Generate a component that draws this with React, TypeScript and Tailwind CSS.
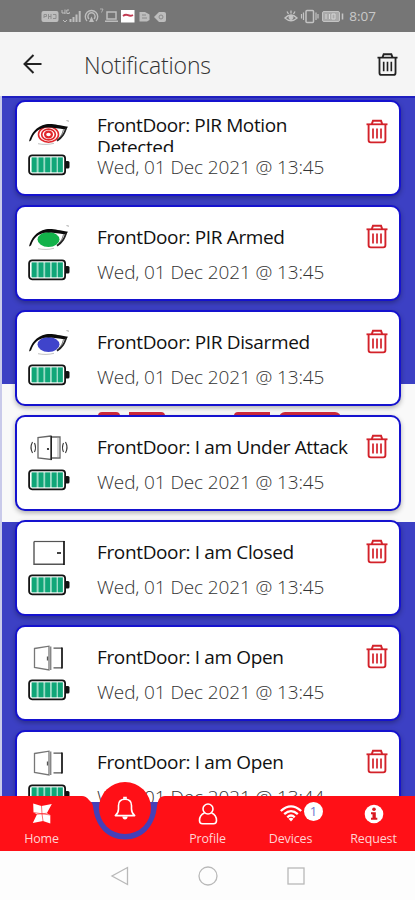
import { Fragment } from 'react';
import clsx from 'clsx';

type IconKind =
  | 'eye-motion'
  | 'eye-armed'
  | 'eye-disarmed'
  | 'attack'
  | 'closed'
  | 'open';

type Notification = {
  id: number;
  icon: IconKind;
  title: string;
  date: string;
  wraps?: boolean;
};

const notifications: Notification[] = [
  {
    id: 1,
    icon: 'eye-motion',
    title: 'FrontDoor: PIR Motion Detected',
    date: 'Wed, 01 Dec 2021 @ 13:45',
    wraps: true,
  },
  {
    id: 2,
    icon: 'eye-armed',
    title: 'FrontDoor: PIR Armed',
    date: 'Wed, 01 Dec 2021 @ 13:45',
  },
  {
    id: 3,
    icon: 'eye-disarmed',
    title: 'FrontDoor: PIR Disarmed',
    date: 'Wed, 01 Dec 2021 @ 13:45',
  },
  {
    id: 4,
    icon: 'attack',
    title: 'FrontDoor: I am Under Attack',
    date: 'Wed, 01 Dec 2021 @ 13:45',
  },
  {
    id: 5,
    icon: 'closed',
    title: 'FrontDoor: I am Closed',
    date: 'Wed, 01 Dec 2021 @ 13:45',
  },
  {
    id: 6,
    icon: 'open',
    title: 'FrontDoor: I am Open',
    date: 'Wed, 01 Dec 2021 @ 13:45',
  },
  {
    id: 7,
    icon: 'open',
    title: 'FrontDoor: I am Open',
    date: 'Wed, 01 Dec 2021 @ 13:44',
  },
];

function TrashIcon({ className }: { className?: string }) {
  return (
    <svg
      viewBox="0 0 22 24"
      className={className}
      fill="none"
      stroke="currentColor"
    >
      <path d="M0.5 4.8H21.5" strokeWidth="1.8" />
      <path d="M5.8 4.5L7 1.2H15L16.2 4.5" strokeWidth="2" />
      <path
        d="M2.6 5V20.8Q2.6 22.9 4.7 22.9H17.3Q19.4 22.9 19.4 20.8V5"
        strokeWidth="1.9"
      />
      <path d="M7 9V19M11 9V19M15 9V19" strokeWidth="1.7" />
    </svg>
  );
}

function EyeIcon({ kind }: { kind: IconKind }) {
  return (
    <svg viewBox="0 0 42 28" className="h-7 w-[42px]" fill="none">
      {kind === 'eye-motion' ? (
        <g stroke="#e0262b">
          <ellipse cx="20.5" cy="16.5" rx="10" ry="7.7" strokeWidth="1.6" />
          <ellipse cx="20.5" cy="16.5" rx="6.8" ry="5.4" strokeWidth="1.7" />
          <ellipse cx="20.5" cy="16.5" rx="3.4" ry="2.9" strokeWidth="2.2" />
        </g>
      ) : (
        <ellipse
          cx="20.5"
          cy="16.5"
          rx="11"
          ry="7.6"
          fill={kind === 'eye-armed' ? '#12b24a' : '#3f44cb'}
        />
      )}
      <path
        d="M1 23.5C3 15.5 8 8.5 18 6.3C25 5.3 30 7.3 40 8.7L38 11.4C29 10.4 24 8.8 18 9.6C10 10.6 5.8 15 3 22.5Z"
        fill="#0b0b0b"
      />
      <path
        d="M38.2 10C36.5 15 35 19 29 22.7"
        stroke="#222"
        strokeWidth="1.8"
      />
      <path d="M35.5 11.5C34.5 15.5 33.5 17.5 31 20" stroke="#444" strokeWidth="0.8" />
      <path d="M10 25.7C15 26.7 21 26.7 26 25.3" stroke="#bbb" strokeWidth="0.9" />
      <path d="M38.5 2.6L41 3.2" stroke="#aaa" />
    </svg>
  );
}

function DoorIcon({ kind }: { kind: IconKind }) {
  if (kind === 'closed') {
    return (
      <svg viewBox="0 0 42 28" className="h-7 w-[42px]" fill="none">
        <path d="M6 3.5H36.5" stroke="#555" strokeWidth="1.2" />
        <path d="M6 3.5V26.3H36" stroke="#555" strokeWidth="1.4" />
        <path d="M36 3V27" stroke="#111" strokeWidth="1.7" />
        <path d="M29 15H33" stroke="#222" strokeWidth="1.7" />
      </svg>
    );
  }
  if (kind === 'attack') {
    return (
      <svg viewBox="0 0 42 28" className="h-7 w-[42px]" fill="none">
        <g stroke="#666" strokeWidth="1.3">
          <path d="M23 3L10 4.5V25L23 26.5Z" />
          <path d="M24 4H32V25H24" />
          <path d="M30 4V25" stroke="#999" strokeWidth="0.8" />
        </g>
        <path d="M23.3 3V27" stroke="#222" strokeWidth="1.4" />
        <circle cx="20" cy="16" r="1.1" fill="#111" />
        <g stroke="#333" strokeWidth="1.1">
          <path d="M4.5 9Q1.5 14.5 4.5 20M6.5 10Q8.5 14.5 6.5 19" />
          <path d="M37.5 9Q40.5 14.5 37.5 20M35.5 10Q33.5 14.5 35.5 19" />
        </g>
      </svg>
    );
  }
  return (
    <svg viewBox="0 0 42 28" className="h-7 w-[42px]" fill="none">
      <path
        d="M6.5 5.5L21 3.2V27L6.5 24.5Z"
        stroke="#777"
        strokeWidth="1.3"
      />
      <path d="M22.8 3.5V27" stroke="#555" strokeWidth="1" />
      <path d="M19.5 13.5V17.5" stroke="#555" strokeWidth="1.3" />
      <path d="M25.5 5.2H34M25.5 24.8H34" stroke="#555" strokeWidth="1.3" />
      <path d="M34 4.5V25.4" stroke="#111" strokeWidth="1.7" />
    </svg>
  );
}

function BatteryIcon() {
  return (
    <svg viewBox="0 0 42 22" className="h-[22px] w-[42px]">
      <rect x="37" y="7" width="4.5" height="7.5" rx="1.5" fill="#111" />
      <rect
        x="1.1"
        y="1.3"
        width="36"
        height="19"
        rx="3"
        fill="#fff"
        stroke="#141414"
        strokeWidth="1.8"
      />
      <rect x="3.4" y="3.4" width="31.4" height="14.9" fill="#9bdcc6" />
      <path
        d="M6.2 3.4V18.3M13 3.4V18.3M19.6 3.4V18.3M26.2 3.4V18.3M32.4 3.4V18.3"
        stroke="#10a678"
        strokeWidth="4.8"
      />
    </svg>
  );
}

function NotificationCard({ item }: { item: Notification }) {
  return (
    <div className="flex h-24 shrink-0 rounded-[10px] border-2 border-[#1512cf] bg-white shadow-[0_2px_5px_rgba(0,0,0,0.3)]">
      <div className="flex w-20 flex-col pl-[11px] pt-4">
        {item.icon.startsWith('eye') ? (
          <EyeIcon kind={item.icon} />
        ) : (
          <DoorIcon kind={item.icon} />
        )}
        <div className="mt-2">
          <BatteryIcon />
        </div>
      </div>
      <div className="w-[262px]">
        <div
          className={clsx(
            'h-[50px] overflow-hidden text-[19px] leading-[22px] text-[#111]',
            item.wraps
              ? 'w-[215px] pt-3 tracking-[-0.4px]'
              : 'pt-[19px] tracking-[-0.36px] whitespace-nowrap',
          )}
        >
          {item.title}
        </div>
        <div className="pt-[4px] text-[19px] font-light leading-[22px] tracking-[-0.12px] whitespace-nowrap text-[#333]">
          {item.date}
        </div>
      </div>
      <TrashIcon className="mt-[17px] ml-[7px] h-[25px] w-[22px] text-[#d3222a]" />
    </div>
  );
}

function StatusBar() {
  return (
    <div className="flex h-8 shrink-0 items-center justify-between bg-[#767676] pl-[41px] pr-[39px] text-[#c9c9c9]">
      <svg viewBox="0 0 126 16" className="h-4 w-[126px]" fill="none" stroke="#bdbdbd">
        <rect x="0.5" y="3" width="17" height="11" rx="2" fill="#bdbdbd" stroke="none" />
        <path d="M3 10V6.5H5.5V8.5H3M7.5 6V11M7.5 8.5H10M10 6V11M12 6.5H15V10.5H12" stroke="#8f8f8f" />
        <path d="M21 2V5H24M24 1.5V6M28 2H25.8V5.5H28.3V4" strokeWidth="1" />
        <path d="M22 12L24 14L26 12" />
        <path d="M29.5 14V11M32.5 14V9M35.5 14V6.5M38.7 14V3" strokeWidth="2" />
        <path d="M46 13A6.2 6.2 0 1 1 55 13M48 11A3.6 3.6 0 1 1 53 11" strokeWidth="1.4" />
        <path d="M50.5 8.5L48 14H53Z" fill="#bdbdbd" stroke="none" />
        <path d="M59 1H62L60.5 4.5" strokeWidth="0.8" />
        <path d="M66 4H75V11H66ZM64 13.3H77" strokeWidth="1.5" />
        <rect x="80" y="2" width="13.5" height="12.5" fill="#fff" stroke="none" />
        <path d="M82 8Q84.5 6 87 7.2T92 7" stroke="#c23b52" strokeWidth="1.9" />
        <path d="M98.5 4H104L108.5 6.5V12L106 13.5H98.5Z" fill="#bdbdbd" stroke="none" />
        <path d="M101 7H105M101 10H106" stroke="#8a8a8a" />
        <path d="M113 9L118 4H123Q125 4 125 6V12Q125 14 123 14H118Z" fill="#bdbdbd" stroke="none" />
        <circle cx="120" cy="9" r="2" stroke="#8a8a8a" />
      </svg>
      <div className="flex items-center gap-1">
        <svg viewBox="0 0 61 16" className="h-4 w-[61px]" fill="none" stroke="#c4c4c4">
          <path d="M3 3.5L4.5 6M7 2.5V5.5M11 3.5L9.5 6" strokeWidth="1.3" />
          <path d="M1 10Q7 15.5 13 10Q7 4 1 10Z" strokeWidth="1.4" />
          <circle cx="7" cy="9.5" r="2" fill="#c4c4c4" />
          <rect x="22" y="2.5" width="7.5" height="12" rx="1" strokeWidth="1.5" />
          <path d="M19.5 4.5V12M17.5 6V10.5M32 4.5V12M34 6V10.5" strokeWidth="1.2" />
          <rect x="38.5" y="3.5" width="17" height="10" rx="1.5" fill="#aaa" />
          <path d="M42 6V11M45.5 6V11M48 6H51V11H48Z" stroke="#d5d5d5" />
          <path d="M58.5 5.5V11.5" strokeWidth="1.6" />
        </svg>
        <span className="text-[13.5px] leading-4">8:07</span>
      </div>
    </div>
  );
}

// Blue page with the white logo band that shows between the cards
function Backdrop() {
  return (
    <div className="absolute inset-0 flex flex-col pl-0.5">
      <div className="h-72 border-t-2 border-[#1f1fc0] bg-[#3c40c4]" />
      <div className="flex h-[138px] items-start gap-[9px] bg-[#f9f9f9] pl-24 pt-7">
        <div className="h-5 w-[22px] rounded-t-sm bg-[#cf2b3c]" />
        <div className="h-5 w-9 rounded-tr-sm bg-[#cf2b3c]" />
        <div className="ml-[60px] h-5 w-9 rounded-tl-sm bg-[#cf2b3c]" />
        <div className="h-5 w-[62px] rounded-t-md bg-[#cf2b3c]" />
      </div>
      <div className="flex-1 bg-[#3c40c4]" />
    </div>
  );
}

function HomeIcon() {
  return (
    <svg viewBox="0 0 20 21" className="h-[21px] w-5" fill="#fff">
      <path d="M1.2 0.5L9.5 3L19.8 1L14.8 10.2L18.3 12V20.5L11 18L0.8 20L5 11.2L1.5 9.5Z" />
      <path
        d="M9.5 3L10 10.8M1.5 9.5L10 10.8L14.8 10.2M5 11.2L10 10.8L18.3 12M10 10.8L11 18"
        stroke="#ff1017"
        strokeWidth="0.6"
        fill="none"
      />
    </svg>
  );
}

function ProfileIcon() {
  return (
    <svg viewBox="0 0 20 22" className="h-[22px] w-5" fill="none" stroke="#fff" strokeWidth="1.6">
      <circle cx="10" cy="6" r="5" />
      <path d="M6.5 10Q1.5 12 1.5 17.5Q1.5 20.8 4.5 20.8H15.5Q18.5 20.8 18.5 17.5Q18.5 12 13.5 10" />
    </svg>
  );
}

function WifiIcon() {
  return (
    <svg viewBox="0 0 22 17" className="h-[17px] w-[22px]" fill="none" stroke="#fff" strokeWidth="2.3">
      <path d="M0.8 6Q11 -3.2 21.2 6M4.2 9.2Q11 3 17.8 9.2M7.3 12.3Q11 8.8 14.7 12.3" />
      <path d="M8.5 13.8Q11 11.8 13.5 13.8L11 16.5Z" fill="#fff" stroke="none" />
    </svg>
  );
}

function InfoIcon() {
  return (
    <svg viewBox="0 0 20 20" className="h-5 w-5">
      <circle cx="10" cy="10" r="9.3" fill="#fff" />
      <circle cx="10" cy="5.3" r="1.8" fill="#d81921" />
      <path d="M7 8.2H11.8V13.8H13.3V15.8H7V13.8H8.5V10.2H7Z" fill="#d81921" />
    </svg>
  );
}

function BellIcon() {
  return (
    <svg viewBox="0 0 22 24" className="h-6 w-[22px]" fill="none" stroke="#fff" strokeWidth="1.6">
      <path d="M1.3 19.6Q4.5 17 4.5 13V9.5Q4.5 3.2 11 3.2T17.5 9.5V13Q17.5 17 20.7 19.6Z" strokeLinejoin="round" />
      <path d="M10 3V1.5H12V3" />
      <path d="M8.3 20.5H13.7Q13.3 23.5 11 23.5T8.3 20.5Z" fill="#fff" stroke="none" />
    </svg>
  );
}

const tabs = [
  { label: 'Home', icon: <HomeIcon />, iconClass: 'pt-[7px]' },
  { label: '', icon: null, iconClass: '' },
  { label: 'Profile', icon: <ProfileIcon />, iconClass: 'pt-[7px]' },
  { label: 'Devices', icon: <WifiIcon />, iconClass: 'pt-[9px]' },
  { label: 'Request', icon: <InfoIcon />, iconClass: 'pt-2' },
];

function TabBar() {
  return (
    <div className="relative z-10 -mt-1.5 h-[55px] shrink-0">
      <svg viewBox="0 0 415 55" className="absolute inset-0 h-[55px] w-[415px]">
        <path d="M85 6H162V45H85Z" fill="#4540b8" />
        <path
          d="M0 0H82Q86 0 89 4Q92 6 93 10C95 31 108 43.500 125 43.500S155 31 157 10Q157.500 6 159 3Q161 0 165 0H415V55H0Z"
          fill="#ff1017"
        />
      </svg>
      <div className="absolute -top-3.5 left-[99px] flex size-[52px] items-center justify-center rounded-full bg-[#ff1017]">
        <BellIcon />
      </div>
      <div className="relative grid h-full grid-cols-5 text-center text-[12.5px] tracking-[-0.15px] text-[#ffd3d3]">
        {tabs.map((tab, index) => (
          <Fragment key={index}>
            <div className="flex flex-col items-center">
              <div className={clsx('flex h-[34px] items-start', tab.iconClass)}>
                {tab.icon}
              </div>
              <span className="leading-[17px]">{tab.label}</span>
            </div>
          </Fragment>
        ))}
      </div>
      <div className="absolute top-1.5 left-[304px] flex size-[19px] items-center justify-center rounded-full bg-white text-[13px] leading-none text-[#6a78cf]">
        1
      </div>
    </div>
  );
}

export default function App() {
  return (
    <div className="flex h-[900px] w-[415px] flex-col overflow-hidden bg-white font-['Open_Sans','Noto_Sans',sans-serif]">
      <StatusBar />
      <div className="flex h-16 shrink-0 items-center bg-[#f5f5f5] pr-[17px] pl-[23px]">
        <svg viewBox="0 0 20 20" className="h-5 w-5" fill="none" stroke="#222" strokeWidth="2">
          <path d="M10.5 1L1.5 10L10.5 19M1.5 10H18.5" />
        </svg>
        <h1 className="flex-1 pt-0.5 pl-[41px] text-[23px] font-light leading-8 tracking-[-0.15px] text-[#333]">
          Notifications
        </h1>
        <TrashIcon className="h-[23px] w-[21px] text-[#222]" />
      </div>
      <div className="relative h-[706px] shrink-0 overflow-hidden bg-[#c9caea]">
        <Backdrop />
        <div className="relative flex flex-col gap-[9px] pt-1 pr-3.5 pl-[15px]">
          {notifications.map((item) => (
            <NotificationCard key={item.id} item={item} />
          ))}
        </div>
      </div>
      <TabBar />
      <div className="flex flex-1 items-center justify-center bg-[#fdfdfd] text-[#b9b9b9]">
        <svg viewBox="0 0 200 20" className="h-5 w-[200px]" fill="none" stroke="currentColor" strokeWidth="1.3">
          <path d="M19.5 1.5V18.5L4 10Z" />
          <circle cx="100" cy="10" r="9" />
          <rect x="180" y="2" width="16" height="16" />
        </svg>
      </div>
    </div>
  );
}
